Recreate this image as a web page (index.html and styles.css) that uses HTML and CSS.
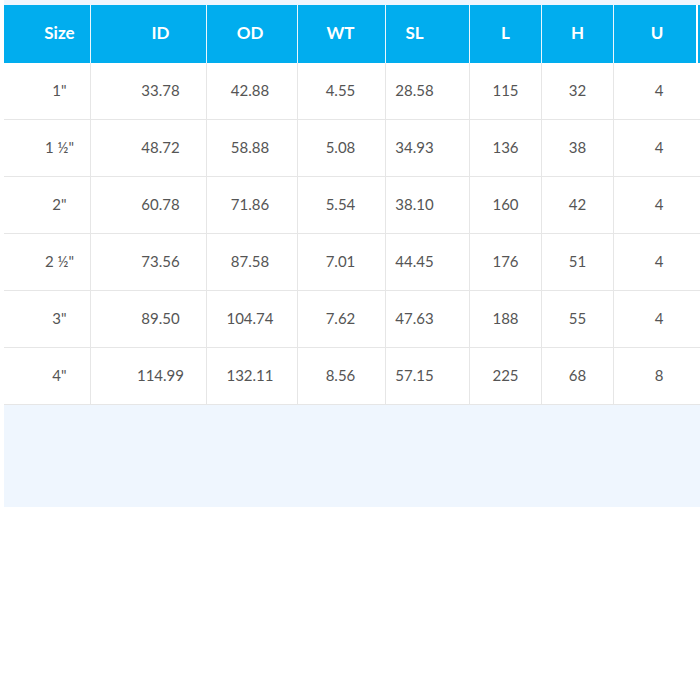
FILE: index.html
```html
<!DOCTYPE html>
<html>
<head>
<meta charset="utf-8">
<link rel="stylesheet" href="styles.css">
</head>
<body>
<div class="panel">
  <div class="table">
    <div class="row head">
      <div class="c c1">Size</div><div class="c c2">ID</div><div class="c c3">OD</div><div class="c c4">WT</div><div class="c c5">SL</div><div class="c c6">L</div><div class="c c7">H</div><div class="c c8">U</div>
    </div>
    <div class="row">
      <div class="c c1">1"</div><div class="c c2">33.78</div><div class="c c3">42.88</div><div class="c c4">4.55</div><div class="c c5">28.58</div><div class="c c6">115</div><div class="c c7">32</div><div class="c c8">4</div>
    </div>
    <div class="row">
      <div class="c c1">1 ½"</div><div class="c c2">48.72</div><div class="c c3">58.88</div><div class="c c4">5.08</div><div class="c c5">34.93</div><div class="c c6">136</div><div class="c c7">38</div><div class="c c8">4</div>
    </div>
    <div class="row">
      <div class="c c1">2"</div><div class="c c2">60.78</div><div class="c c3">71.86</div><div class="c c4">5.54</div><div class="c c5">38.10</div><div class="c c6">160</div><div class="c c7">42</div><div class="c c8">4</div>
    </div>
    <div class="row">
      <div class="c c1">2 ½"</div><div class="c c2">73.56</div><div class="c c3">87.58</div><div class="c c4">7.01</div><div class="c c5">44.45</div><div class="c c6">176</div><div class="c c7">51</div><div class="c c8">4</div>
    </div>
    <div class="row">
      <div class="c c1">3"</div><div class="c c2">89.50</div><div class="c c3">104.74</div><div class="c c4">7.62</div><div class="c c5">47.63</div><div class="c c6">188</div><div class="c c7">55</div><div class="c c8">4</div>
    </div>
    <div class="row">
      <div class="c c1">4"</div><div class="c c2">114.99</div><div class="c c3">132.11</div><div class="c c4">8.56</div><div class="c c5">57.15</div><div class="c c6">225</div><div class="c c7">68</div><div class="c c8">8</div>
    </div>
  </div>
</div>
</body>
</html>
```
FILE: styles.css
```css
html, body {
  margin: 0;
  padding: 0;
  background: #ffffff;
}
.panel {
  margin-left: 4px;
  width: 696px;
  height: 507px;
  padding-top: 5px;
  box-sizing: border-box;
  background: #eff6fe;
  overflow: hidden;
}
.table {
  width: 696px;
  background: #ffffff;
}
.row {
  display: grid;
  grid-template-columns: 87px 116px 91px 88px 84px 72px 72px 86px;
  height: 57px;
  border-bottom: 1px solid #e6e6e6;
  box-sizing: border-box;
  font-family: "Lato", "Liberation Sans", sans-serif;
  font-size: 15px;
  color: #555555;
}
.c {
  display: flex;
  align-items: center;
  justify-content: center;
  padding-bottom: 3px;
  border-right: 1px solid #e6e6e6;
  box-sizing: border-box;
}
.c8 { border-right: none; }
.head {
  height: 58px;
  background: #01adee;
  color: #ffffff;
  font-weight: 700;
  font-size: 17px;
  border-bottom: none;
}
.head .c { border-right: 1px solid #e9f7fd; }
.head .c8 { border-right: 2px solid #ffffff; margin-right: 2px; }
.c1 { padding-left: 25px; }
.c2 { padding-left: 24px; }
.c3 { padding-right: 4px; }
.c4 { padding-right: 2px; }
.c5 { padding-right: 26px; }
.c8 { padding-left: 4px; }
```
